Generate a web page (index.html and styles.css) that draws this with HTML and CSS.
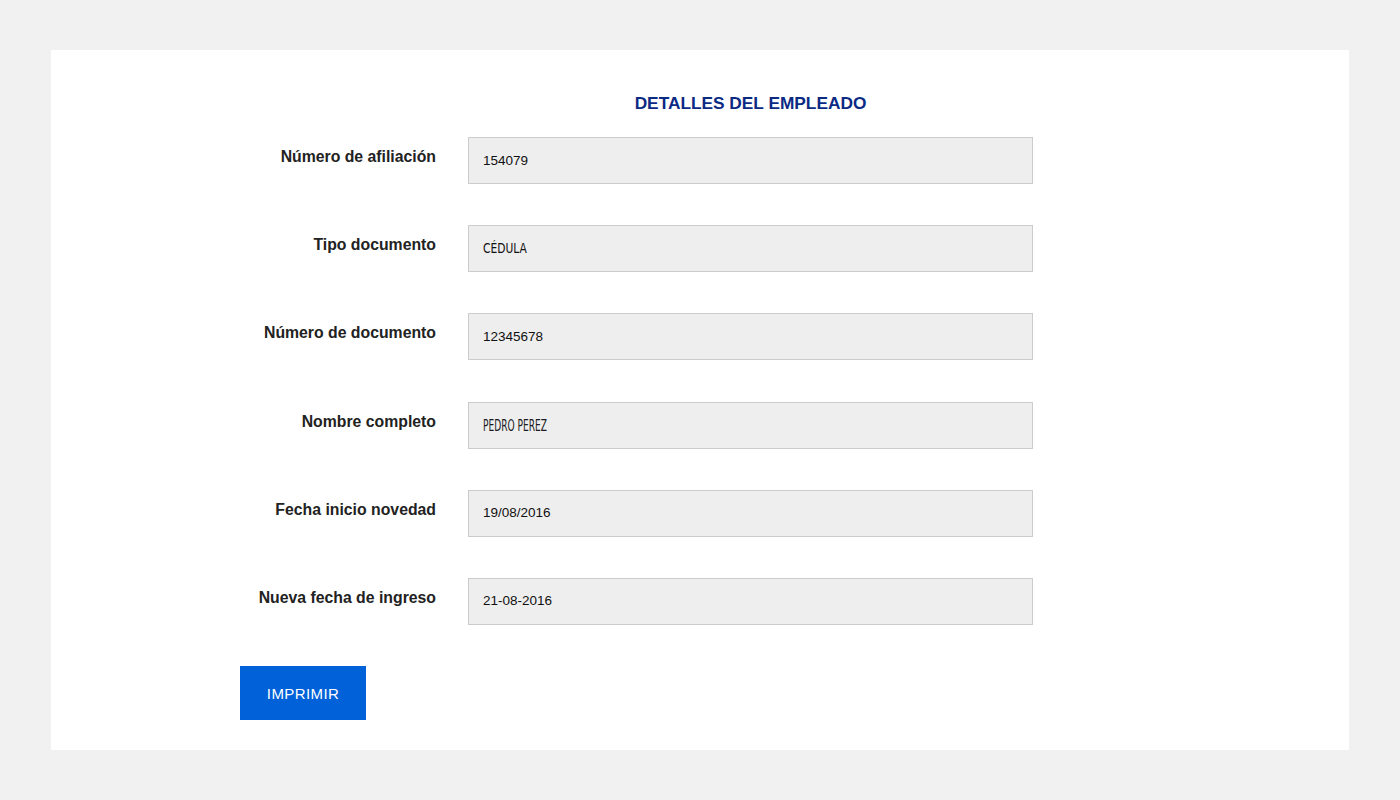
FILE: index.html
```html
<!DOCTYPE html>
<html lang="es">
<head>
<meta charset="utf-8">
<title>Detalles del empleado</title>
<link rel="stylesheet" href="styles.css">
</head>
<body>
<main class="card">
  <form class="form">
    <h1 class="title">DETALLES DEL EMPLEADO</h1>
    <div class="row">
      <label class="label">Número de afiliación</label>
      <div class="field">154079</div>
    </div>
    <div class="row">
      <label class="label">Tipo documento</label>
      <div class="field"><span class="cond cond-doc">CÉDULA</span></div>
    </div>
    <div class="row">
      <label class="label">Número de documento</label>
      <div class="field">12345678</div>
    </div>
    <div class="row">
      <label class="label">Nombre completo</label>
      <div class="field"><span class="cond cond-name">PEDRO PEREZ</span></div>
    </div>
    <div class="row">
      <label class="label">Fecha inicio novedad</label>
      <div class="field">19/08/2016</div>
    </div>
    <div class="row">
      <label class="label">Nueva fecha de ingreso</label>
      <div class="field">21-08-2016</div>
    </div>
    <div class="actions">
      <button type="button" class="btn">IMPRIMIR</button>
    </div>
  </form>
</main>
</body>
</html>
```
FILE: styles.css
```css
* { box-sizing: border-box; }
html, body { margin: 0; padding: 0; }
body {
  background: #f1f1f1;
  font-family: "Liberation Sans", Arial, sans-serif;
  padding: 50px 51px;
}
.card {
  background: #ffffff;
  height: 700px;
  padding: 42px 0 30px 189px;
}
.form {
  display: grid;
  grid-template-columns: 196px 565px;
  column-gap: 32px;
  row-gap: 41.2px;
}
.title {
  grid-column: 2;
  margin: 0 0 -18.2px;
  text-align: center;
  font-size: 17.3px;
  line-height: 22px;
  font-weight: bold;
  color: #0b2a84;
}
.row {
  display: contents;
}
.label {
  grid-column: 1;
  text-align: right;
  font-weight: bold;
  font-size: 15.8px;
  line-height: 20px;
  color: #222222;
  padding-top: 10px;
  white-space: nowrap;
}
.field {
  grid-column: 2;
  height: 47px;
  background: #eeeeee;
  border: 1px solid #cccccc;
  padding: 0 14px 1px;
  display: flex;
  align-items: center;
  font-size: 13.5px;
  color: #111111;
}
.cond {
  display: inline-block;
  transform-origin: left center;
  font-family: "DejaVu Sans Condensed", "DejaVu Sans", sans-serif;
}
.cond-doc {
  font-size: 13.5px;
  transform: scaleX(0.88);
}
.cond-name {
  font-size: 16px;
  transform: scaleX(0.63);
  padding-top: 1px;
  color: #1a1a22;
}
.actions {
  grid-column: 1 / span 2;
}
.btn {
  display: block;
  width: 126px;
  height: 54px;
  background: #0061d9;
  color: #ffffff;
  border: none;
  font-family: "Liberation Sans", Arial, sans-serif;
  font-size: 15px;
  letter-spacing: 0.4px;
  padding: 0;
}
```
